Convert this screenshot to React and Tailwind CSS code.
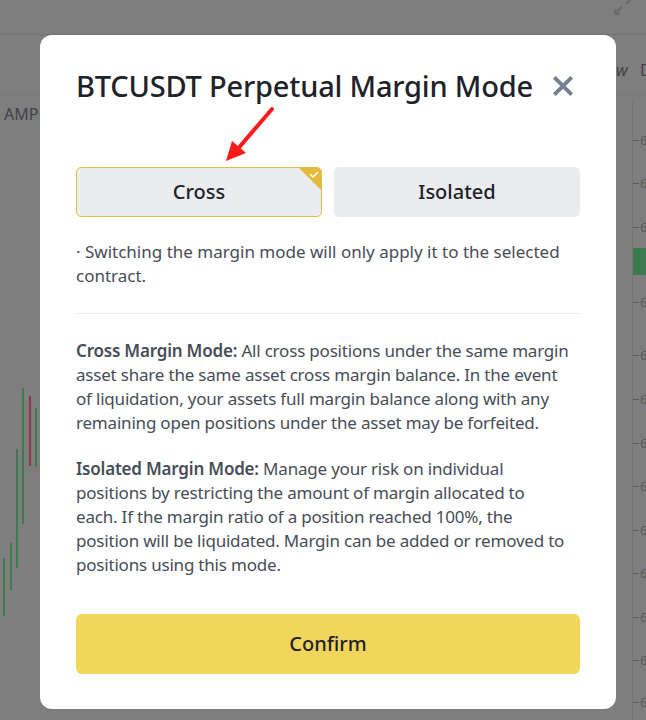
import React from 'react';

// Chart backdrop, dimmed behind the dialog
const candles = [
  { x: 3, top: 558, bottom: 616, up: true },
  { x: 10, top: 543, bottom: 590, up: true },
  { x: 16, top: 449, bottom: 568, up: true },
  { x: 22, top: 388, bottom: 524, up: true },
  { x: 29, top: 396, bottom: 466, up: false },
  { x: 35, top: 408, bottom: 467, up: true },
];

const ticks = [140, 183, 227, 302, 355, 399, 443, 486, 530, 573, 617, 660, 702];

function ChartBackdrop() {
  return (
    <div className="absolute inset-0 bg-[#7e7e7e] overflow-hidden">
      <div className="absolute left-0 right-0 top-[34px] h-px bg-[#747474]" />
      <div className="absolute left-0 right-0 top-[94px] h-px bg-[#777777]" />
      <span className="absolute left-[4px] top-[102px] text-[16px] text-[#3f4249]">AMP</span>
      <span className="absolute left-[616px] top-[58px] text-[16px] italic text-[#3f4249]">w</span>
      <span className="absolute left-[640px] top-[58px] text-[16px] text-[#3f4249]">D</span>
      <svg className="absolute left-[612px] top-0" width="24" height="16" viewBox="0 0 24 16" fill="none" stroke="#6c6c6c" strokeWidth="2.5">
        <path d="M3 14 L10 7 M3 14 h5 M3 14 v-5 M14 4 L20 -2" />
      </svg>
      <div className="absolute left-[632px] top-[100px] bottom-0 w-px bg-[#747474]" />
      {ticks.map((y) => (
        <div key={y} className="absolute left-[633px] flex items-center gap-[1px]" style={{ top: y - 8 }}>
          <div className="w-[6px] h-px bg-[#5c5c5c]" />
          <span className="text-[13px] leading-[16px] text-[#5c5c5c]">6</span>
        </div>
      ))}
      <div className="absolute left-[633px] top-[248px] w-[13px] h-[27px] bg-[#3d7a50]" />
      {candles.map((c, i) => (
        <div
          key={i}
          className={`absolute w-[2px] ${c.up ? 'bg-[#3d7a50]' : 'bg-[#8a3a48]'}`}
          style={{ left: c.x, top: c.top, height: c.bottom - c.top }}
        />
      ))}
    </div>
  );
}

function CheckCorner() {
  return (
    <svg className="absolute right-0 top-0" width="22" height="22" viewBox="0 0 22 22">
      <path d="M0 0 H18 A4 4 0 0 1 22 4 V22 Z" fill="#e6b83c" />
      <path d="M11.5 6.5 L14 9 L18.5 4.5" fill="none" stroke="#ffffff" strokeWidth="1.6" strokeLinecap="round" strokeLinejoin="round" />
    </svg>
  );
}

export default function App() {
  return (
    <div className="relative w-[646px] h-[720px] overflow-hidden" style={{ fontFamily: '"Noto Sans", "Open Sans", sans-serif' }}>
      <ChartBackdrop />

      {/* Margin mode dialog */}
      <div className="absolute left-[40px] top-[35px] w-[576px] h-[674px] bg-white rounded-[12px] px-9 pt-[30px] pb-[35px] flex flex-col">
        <div className="flex items-center justify-between h-[40px]">
          <h2 className="text-[29px] font-medium text-[#1e2329] leading-none tracking-[-0.2px]">BTCUSDT Perpetual Margin Mode</h2>
          <svg width="26" height="26" viewBox="0 0 24 24" className="mr-[4px] mt-[2px]">
            <path d="M4 4 L20 20 M20 4 L4 20" stroke="#76808f" strokeWidth="3.6" strokeLinecap="butt" />
          </svg>
        </div>

        <div className="relative mt-[62px] grid grid-cols-2 gap-3">
          <svg className="absolute left-[146px] -top-[62px]" width="54" height="62" viewBox="0 0 54 62">
            <path d="M50 4 L14 46" stroke="#ff1a1a" strokeWidth="4" strokeLinecap="round" />
            <path d="M4 56 L10 36 L24 48 Z" fill="#ff1a1a" />
          </svg>
          <button className="relative h-[50px] rounded-[5px] bg-[#eaecef] border border-[#e3bd45] text-[20px] font-medium text-[#1e2329]">
            Cross
            <CheckCorner />
          </button>
          <button className="h-[50px] rounded-[5px] bg-[#eaecef] text-[20px] font-medium text-[#1e2329]">
            Isolated
          </button>
        </div>

        <p className="mt-[23px] text-[17px] leading-[24px] text-[#474d57]">
          · Switching the margin mode will only apply it to the selected contract.
        </p>

        <div className="mt-[25px] h-px bg-[#eaecef]" />

        <div className="mt-[25px] flex flex-col gap-[22px] text-[17px] leading-[24px] tracking-[-0.2px] text-[#474d57]">
          <p>
            <span className="font-semibold">Cross Margin Mode:</span> All cross positions under the same margin<br />
            asset share the same asset cross margin balance. In the event<br />
            of liquidation, your assets full margin balance along with any<br />
            remaining open positions under the asset may be forfeited.
          </p>
          <p>
            <span className="font-semibold">Isolated Margin Mode:</span> Manage your risk on individual<br />
            positions by restricting the amount of margin allocated to<br />
            each. If the margin ratio of a position reached 100%, the<br />
            position will be liquidated. Margin can be added or removed to<br />
            positions using this mode.
          </p>
        </div>

        <button className="mt-auto h-[60px] rounded-[6px] bg-[#f0d65a] text-[20px] font-medium text-[#1e2329]">
          Confirm
        </button>
      </div>
    </div>
  );
}
